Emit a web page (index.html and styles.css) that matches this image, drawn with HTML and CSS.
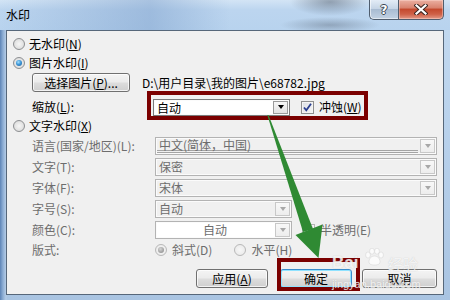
FILE: index.html
```html
<!DOCTYPE html>
<html lang="zh-CN">
<head>
<meta charset="utf-8">
<title>水印</title>
<link rel="stylesheet" href="styles.css">
</head>
<body>
<div class="window">
  <div class="titlebar">
    <span class="title">水印</span>
    <div class="caption-btns">
      <span class="cap help"><span class="qmark">?</span></span>
      <span class="cap close">
        <svg width="14" height="11" viewBox="0 0 14 11"><path d="M2.5 1.5 L11.5 9.5 M11.5 1.5 L2.5 9.5" stroke="#3a2420" stroke-width="4.2" stroke-linecap="square" fill="none"/><path d="M2.5 1.5 L11.5 9.5 M11.5 1.5 L2.5 9.5" stroke="#ffffff" stroke-width="2.2" stroke-linecap="square" fill="none"/></svg>
      </span>
    </div>
  </div>
  <div class="client">
    <div class="row radio-row r-a"><span class="radio"></span><span class="lbl">无水印(<u>N</u>)</span></div>
    <div class="row radio-row r-b"><span class="radio on"></span><span class="lbl">图片水印(<u>I</u>)</span></div>
    <div class="row field r-c">
      <span class="btn pick">选择图片(<u>P</u>)...</span>
      <span class="path">D:\用户目录\我的图片\e68782.jpg</span>
    </div>
    <div class="row field r-d">
      <span class="flabel scale-label">缩放(<u>L</u>):</span>
      <span class="hl-group">
        <span class="combo enabled w-s"><span class="val">自动</span><span class="drop"><i class="tri"></i></span></span>
        <span class="check on"><svg width="11" height="11" viewBox="0 0 11 11"><path d="M2 5.5 L4.3 8.3 L9 1.8" stroke="#2a3f8f" stroke-width="1.8" fill="none"/></svg></span>
        <span class="clbl">冲蚀(<u>W</u>)</span>
      </span>
    </div>
    <div class="row radio-row r-e"><span class="radio"></span><span class="lbl">文字水印(<u>X</u>)</span></div>
    <div class="row field dis r-f">
      <span class="flabel">语言(国家/地区)(L):</span>
      <span class="combo w-l"><span class="val dbl">中文(简体，中国)</span><span class="drop"><i class="tri"></i></span></span>
    </div>
    <div class="row field dis r-g">
      <span class="flabel">文字(T):</span>
      <span class="combo w-l"><span class="val">保密</span><span class="drop"><i class="tri"></i></span></span>
    </div>
    <div class="row field dis r-h">
      <span class="flabel">字体(F):</span>
      <span class="combo w-l"><span class="val">宋体</span><span class="drop"><i class="tri"></i></span></span>
    </div>
    <div class="row field dis r-i">
      <span class="flabel">字号(S):</span>
      <span class="combo w-s"><span class="val">自动</span><span class="drop"><i class="tri"></i></span></span>
    </div>
    <div class="row field dis r-j">
      <span class="flabel">颜色(C):</span>
      <span class="combo w-s white"><span class="val center">自动</span><span class="drop"><i class="tri"></i></span></span>
      <span class="check dis-check"></span>
      <span class="clbl">半透明(E)</span>
    </div>
    <div class="row field dis r-k">
      <span class="flabel">版式:</span>
      <span class="radio dis-radio on-dis"></span><span class="rl">斜式(D)</span>
      <span class="radio dis-radio second"></span><span class="rl">水平(H)</span>
    </div>
    <div class="row buttons">
      <span class="btn apply">应用(<u>A</u>)</span>
      <span class="ok-wrap"><span class="btn ok">确定</span></span>
      <span class="btn cancel">取消</span>
    </div>
  </div>

  <div class="watermark">
    <span class="wm-bai">Bai</span>
    <svg class="wm-paw" width="22" height="18" viewBox="0 0 22 18"><g fill="rgba(255,255,255,0.75)" stroke="rgba(160,160,160,0.35)" stroke-width="0.6"><ellipse cx="5" cy="7" rx="2.4" ry="3"/><ellipse cx="9" cy="3.2" rx="2.4" ry="3"/><ellipse cx="14" cy="3.2" rx="2.4" ry="3"/><ellipse cx="18" cy="7" rx="2.4" ry="3"/><path d="M11.5 8 C7 8 5 13 6.5 15.5 C8 17.5 15 17.5 16.5 15.5 C18 13 16 8 11.5 8 Z"/></g></svg>
    <span class="wm-jy">经验</span>
    <span class="wm-url">jingyan.baidu.com</span>
  </div>

  <svg class="arrow" width="450" height="300" viewBox="0 0 450 300">
    <polygon points="267.3,115 268.5,115 313,229 303,232" fill="#2f8a33"/>
    <polygon points="295.5,235 322.5,224.5 318.5,258" fill="#2f8a33"/>
  </svg>
</div>
</body>
</html>
```

FILE: styles.css
```css
* { box-sizing: border-box; }
html, body { margin: 0; padding: 0; }
body {
  width: 450px;
  height: 300px;
  overflow: hidden;
  font-family: "Noto Sans CJK SC", "Liberation Sans", sans-serif;
  font-size: 12px;
  line-height: 14px;
  color: #000;
  background: #9fb9d8;
}
u { text-decoration: underline; text-underline-offset: 1px; }

.window {
  position: relative;
  width: 450px;
  height: 300px;
  display: flex;
  flex-direction: column;
  background:
    linear-gradient(90deg, #5d84b6 0px, #8eaed4 3px, #b5cce6 6px, rgba(181,204,230,0) 7px),
    linear-gradient(180deg, #c4daf0 0px, #b9d2ec 40%, #a9c4e2 100%);
}

/* title bar */
.titlebar {
  height: 30px;
  display: flex;
  justify-content: space-between;
  align-items: flex-start;
  padding: 0 6px;
  background:
    radial-gradient(ellipse 40px 14px at 330px 2px, rgba(70,80,95,0.45), rgba(70,80,95,0) 100%),
    radial-gradient(ellipse 50px 8px at 330px 25px, rgba(70,80,95,0.35), rgba(70,80,95,0) 100%),
    linear-gradient(90deg, rgba(150,180,215,0) 0px, rgba(120,155,200,0.45) 150px, rgba(150,185,225,0) 230px),
    linear-gradient(180deg, #d3e4f5 0px, #bcd5ef 10px, #b8d3ee 100%);
}
.title {
  margin-top: 8px;
  font-size: 12px;
  line-height: 14px;
  color: #000;
}
.caption-btns { display: flex; }
.cap {
  height: 20px;
  display: flex;
  align-items: center;
  justify-content: center;
  border: 1px solid #4f5d6e;
  border-top: none;
}
.help {
  width: 29px;
  border-right: none;
  border-radius: 0 0 0 5px;
  background: linear-gradient(180deg, #e3ecf6 0%, #c6d5e6 45%, #a9bcd2 50%, #c2d2e3 100%);
  box-shadow: inset 1px 0 0 rgba(255,255,255,0.6), inset 0 -1px 0 rgba(255,255,255,0.5);
}
.qmark {
  font-family: "DejaVu Sans", sans-serif;
  font-weight: bold;
  font-size: 12px;
  line-height: 12px;
  color: #fff;
  text-shadow: 1px 0 0 #3c4652, -1px 0 0 #3c4652, 0 1px 0 #3c4652, 0 -1px 0 #3c4652;
}
.close {
  width: 46px;
  border-radius: 0 0 5px 0;
  background: linear-gradient(180deg, #ebb0a2 0%, #d98470 40%, #c44a2f 50%, #cf6148 75%, #e29a88 100%);
  box-shadow: inset 0 0 0 1px rgba(255,220,210,0.45);
}

/* client area */
.client {
  flex: 1;
  margin: 0 6px 5px 6px;
  border: 1px solid #56677a;
  background: #f0f0f0;
  display: flex;
  flex-direction: column;
  padding: 3px 6px 6px 6px;
  position: relative;
}
.row { display: flex; align-items: center; flex-shrink: 0; }
.radio-row { height: 19px; }
.radio-row .lbl { margin-left: 4px; }
.r-c { height: 19px; margin-top: 1px; }
.r-d { height: 22px; margin-top: 4px; }
.r-e { height: 15px; margin-top: 0; }
.r-f { height: 18px; margin-top: 4px; }
.r-g, .r-h, .r-i, .r-j { height: 18px; margin-top: 3px; }
.r-k { height: 18px; margin-top: 2px; }
.field { padding-left: 19px; }
.flabel { width: 123px; flex-shrink: 0; white-space: nowrap; }
.scale-label { width: 121px; }
.dis { color: #6d6d6d; }

/* radio */
.radio {
  width: 12px;
  height: 12px;
  border-radius: 50%;
  border: 1px solid #8d8f92;
  background: radial-gradient(circle at 50% 50%, #f6f6f6 0%, #e2e2e2 60%, #cfcfcf 100%);
  flex-shrink: 0;
  display: flex;
  align-items: center;
  justify-content: center;
}
.radio.on::after {
  content: "";
  width: 6px;
  height: 6px;
  border-radius: 50%;
  background: radial-gradient(circle at 40% 35%, #a5e1ff 0%, #3e97d8 45%, #1a5a99 100%);
}
.dis-radio {
  border-color: #b8b8b8;
  background: radial-gradient(circle, #f7f7f7 0%, #ececec 70%, #e0e0e0 100%);
}
.on-dis::after {
  content: "";
  width: 6px;
  height: 6px;
  border-radius: 50%;
  background: radial-gradient(circle at 40% 35%, #d6d6d6 0%, #a2a2a2 60%, #8a8a8a 100%);
}
.r-k .rl { margin-left: 5px; }
.r-k .second { margin-left: 22px; }

/* buttons */
.btn {
  height: 19px;
  display: inline-flex;
  align-items: center;
  justify-content: center;
  border: 1px solid #707070;
  border-radius: 3px;
  background: linear-gradient(180deg, #f4f4f4 0%, #ebebeb 48%, #dddddd 52%, #cfcfcf 100%);
  box-shadow: inset 0 0 0 1px rgba(255,255,255,0.75);
  color: #000;
  flex-shrink: 0;
}
.pick { width: 98px; }
.path { margin-left: 12px; }

/* combos */
.combo {
  display: flex;
  height: 18px;
  border: 1px solid #b3b3b3;
  background: #f0f0f0;
  box-shadow: inset 0 0 0 1px #fbfbfb;
  flex-shrink: 0;
}
.combo .val {
  flex: 1;
  padding-left: 3px;
  line-height: 16px;
  white-space: nowrap;
}
.combo .val.center { text-align: center; padding-left: 0; }
.combo .val.dbl {
  border-bottom: 3px double #a4a4a4;
  margin: 0 1px 1px 1px;
  padding-left: 2px;
  line-height: 13px;
}
.combo .drop {
  width: 15px;
  margin: 1px;
  border: 1px solid #c8c8c8;
  background: linear-gradient(180deg, #f8f8f8, #ededed);
  display: flex;
  align-items: center;
  justify-content: center;
}
.tri {
  width: 0;
  height: 0;
  border-left: 3.5px solid transparent;
  border-right: 3.5px solid transparent;
  border-top: 4px solid #a8a8a8;
}
.w-l { width: 282px; }
.w-s { width: 137px; }
.combo.white { background: #fff; }
.combo.enabled {
  background: #fff;
  border-color: #7a7a7a;
  height: 17px;
}
.combo.enabled .drop { border-color: #9a9a9a; background: linear-gradient(180deg, #f6f6f6, #e2e2e2); }
.combo.enabled .tri { border-top-color: #000; }
.combo.enabled .val { line-height: 15px; }

/* checkbox */
.check {
  width: 13px;
  height: 13px;
  border: 1px solid #8e8f8f;
  background: linear-gradient(135deg, #dcdfe4 0%, #f6f6f6 100%);
  box-shadow: inset 0 0 0 1px #f4f4f4;
  display: inline-flex;
  align-items: center;
  justify-content: center;
  flex-shrink: 0;
}
.dis-check { border-color: #b5b5b5; margin-left: 10px; }
.clbl { margin-left: 5px; }
.r-j .clbl { margin-left: 5px; }

/* highlight boxes (annotation overlays) */
.hl-group {
  position: relative;
  display: flex;
  align-items: center;
}
.hl-group .check { margin-left: 11px; }
.hl-group::after {
  content: "";
  position: absolute;
  left: -6px;
  right: -6px;
  top: -8px;
  bottom: -4px;
  border: 4px solid #7b0000;
}

.buttons {
  margin-top: auto;
  justify-content: flex-end;
}
.apply { width: 72px; }
.ok-wrap { position: relative; margin-left: 12px; display: flex; }
.ok-wrap::after {
  content: "";
  position: absolute;
  left: -3px;
  right: -8px;
  top: -11px;
  bottom: -3px;
  border: 4px solid #7b0000;
}
.ok {
  width: 72px;
  border-color: #3a8ccc;
  box-shadow: inset 0 0 0 1px #8fe2ff;
}
.cancel { width: 75px; margin-left: 10px; }

/* watermark */
.watermark {
  position: absolute;
  left: 330px;
  top: 244px;
  width: 100px;
  height: 50px;
  color: rgba(255,255,255,0.8);
  text-shadow: 0 0 1px rgba(150,150,150,0.5);
  font-family: "Liberation Sans", sans-serif;
  pointer-events: none;
}
.wm-bai { position: absolute; left: 2px; top: 10px; font-size: 17px; font-weight: bold; line-height: 17px; }
.wm-paw { position: absolute; left: 33px; top: 4px; }
.wm-jy { position: absolute; left: 58px; top: 12px; font-family: "Noto Sans CJK SC", sans-serif; font-size: 15px; line-height: 15px; }
.wm-url { position: absolute; left: 2px; top: 35px; font-size: 11px; line-height: 11px; }

.arrow {
  position: absolute;
  left: 0;
  top: 0;
  pointer-events: none;
}
```
